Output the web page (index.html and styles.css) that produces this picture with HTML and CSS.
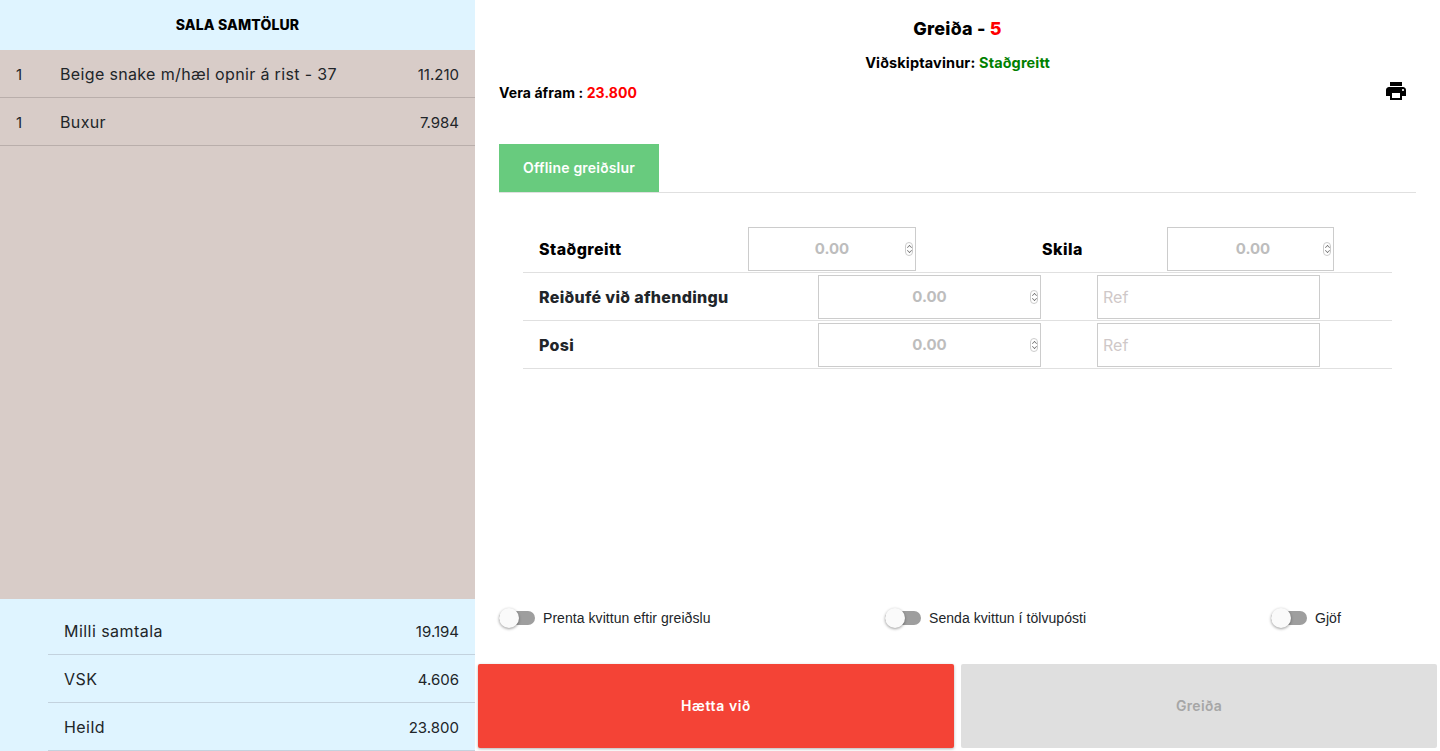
FILE: index.html
```html
<!DOCTYPE html>
<html lang="is">
<head>
    <meta charset="UTF-8">
    <meta name="viewport" content="width=device-width, initial-scale=1.0">
    <title>Greiða</title>
    <link rel="stylesheet" href="styles.css">
</head>
<body>

    <div class="page">

        <!-- Vinstri dálkur -->
        <aside class="summary">
            <h2 class="summary-title">SALA SAMTÖLUR</h2>

            <div class="summary-items">
                <div class="item-row">
                    <span class="item-qty">1</span>
                    <span class="item-name">Beige snake m/hæl opnir á rist - 37</span>
                    <span class="item-price">11.210</span>
                </div>
                <div class="item-row">
                    <span class="item-qty">1</span>
                    <span class="item-name">Buxur</span>
                    <span class="item-price">7.984</span>
                </div>
            </div>

            <div class="summary-totals">
                <div class="total-row"><span class="total-label">Milli samtala</span><span>19.194</span></div>
                <div class="total-row"><span class="total-label">VSK</span><span>4.606</span></div>
                <div class="total-row"><span class="total-label">Heild</span><span>23.800</span></div>
            </div>
        </aside>

        <!-- Greiðsla -->
        <main class="payment">
            <h1 class="pay-title">Greiða - <span class="red">5</span></h1>
            <p class="pay-customer">Viðskiptavinur: <span class="green">Staðgreitt</span></p>

            <div class="pay-balance">
                <p class="balance-text">Vera áfram : <span class="red">23.800</span></p>
                <svg class="print-icon" viewBox="0 0 24 24" width="24" height="24" aria-label="Prenta">
                    <path d="M19 8H5c-1.66 0-3 1.34-3 3v6h4v4h12v-4h4v-6c0-1.66-1.34-3-3-3zm-3 11H8v-5h8v5zm3-7c-.55 0-1-.45-1-1s.45-1 1-1 1 .45 1 1-.45 1-1 1zm-1-9H6v4h12V3z"/>
                </svg>
            </div>

            <div class="tabs">
                <div class="tab">Offline greiðslur</div>
            </div>

            <div class="methods">
                <div class="method-row method-row-cash">
                    <label class="method-label black">Staðgreitt</label>
                    <div class="num-field">
                        <input class="field" type="number" placeholder="0.00">
                        <span class="spinner"></span>
                    </div>
                    <label class="method-label black method-label-return">Skila</label>
                    <div class="num-field">
                        <input class="field" type="number" placeholder="0.00">
                        <span class="spinner"></span>
                    </div>
                </div>
                <div class="method-row">
                    <label class="method-label">Reiðufé við afhendingu</label>
                    <div class="num-field">
                        <input class="field" type="number" placeholder="0.00">
                        <span class="spinner"></span>
                    </div>
                    <input class="field field-ref" type="text" placeholder="Ref">
                </div>
                <div class="method-row">
                    <label class="method-label">Posi</label>
                    <div class="num-field">
                        <input class="field" type="number" placeholder="0.00">
                        <span class="spinner"></span>
                    </div>
                    <input class="field field-ref" type="text" placeholder="Ref">
                </div>
            </div>

            <div class="toggles">
                <div class="toggle-item"><span class="toggle"></span>Prenta kvittun eftir greiðslu</div>
                <div class="toggle-item"><span class="toggle"></span>Senda kvittun í tölvupósti</div>
                <div class="toggle-item"><span class="toggle"></span>Gjöf</div>
            </div>

            <div class="actions">
                <button class="btn btn-cancel">Hætta við</button>
                <button class="btn btn-pay">Greiða</button>
            </div>
        </main>
    </div>

</body>
</html>
```

FILE: styles.css
```css
* {
    box-sizing: border-box;
}

body {
    margin: 0;
    font-family: Inter, "Open Sans", sans-serif;
    color: #212529;
    background-color: #fff;
}

p, h1, h2 {
    margin: 0;
}

.page {
    display: flex;
    height: 751px;
    overflow: hidden;
}

.red {
    color: #f00;
}

.green {
    color: #008000;
}

/* Vinstri dálkur */
.summary {
    width: 475px;
    flex-shrink: 0;
    display: flex;
    flex-direction: column;
    background-color: #dff4ff;
}

.summary-title {
    height: 50px;
    line-height: 50px;
    text-align: center;
    font-size: 14px;
    font-weight: 800;
    letter-spacing: .15px;
    color: #000;
}

.summary-items {
    flex: 1;
    background-color: #d8ccc8;
}

.item-row {
    display: flex;
    align-items: center;
    height: 48px;
    padding: 1px 16px 0;
    border-bottom: 1px solid #b9aeab;
    font-size: 15px;
}

.item-qty {
    width: 44px;
}

.item-name {
    flex: 1;
    font-size: 16px;
    letter-spacing: .35px;
}

.summary-totals {
    padding: 8px 0 0 48px;
    height: 152px;
}

.total-row {
    display: flex;
    justify-content: space-between;
    align-items: center;
    height: 48px;
    padding: 1px 16px 0;
    border-bottom: 1px solid #c3d2de;
    font-size: 15px;
}

.total-label {
    font-size: 16px;
    letter-spacing: .45px;
}

/* Greiðsla */
.payment {
    flex: 1;
    min-width: 0;
    display: flex;
    flex-direction: column;
    padding: 0 3px;
}

.pay-title {
    margin-top: 18px;
    font-size: 18px;
    line-height: 21px;
    font-weight: 800;
    letter-spacing: .2px;
    text-align: center;
    color: #000;
}

.pay-customer {
    margin-top: 14px;
    font-size: 14.5px;
    line-height: 20px;
    font-weight: 700;
    letter-spacing: .15px;
    text-align: center;
    color: #000;
}

.pay-balance {
    display: flex;
    justify-content: space-between;
    align-items: flex-start;
    height: 28px;
    margin: 6px 29px 0 21px;
}

.balance-text {
    font-size: 14px;
    line-height: 28px;
    font-weight: 700;
    letter-spacing: .1px;
    color: #000;
}

.tabs {
    margin: 37px 21px 0 21px;
    border-bottom: 1px solid #e0e0e0;
}

.tab {
    width: 160px;
    height: 48px;
    line-height: 48px;
    text-align: center;
    font-size: 14px;
    font-weight: 600;
    letter-spacing: .2px;
    color: #fff;
    background-color: #68cb7e;
}

.methods {
    margin: 32px 45px 0 45px;
}

.method-row {
    display: grid;
    grid-template-columns: 295px 223px 56px 223px;
    align-items: center;
    height: 48px;
    border-bottom: 1px solid #e0e0e0;
}

.method-row-cash {
    grid-template-columns: 225px 168px 251px 167px;
}

.method-label {
    padding-left: 16px;
    font-size: 16px;
    font-weight: 800;
    letter-spacing: .32px;
    color: #212529;
}

.method-label.black {
    letter-spacing: .45px;
    color: #000;
}

.method-label-return {
    padding-left: 126px;
}

.num-field {
    position: relative;
    height: 44px;
}

.field {
    display: block;
    width: 100%;
    height: 44px;
    padding: 0 5px;
    border: 1px solid #ccc;
    background-color: #fff;
    font-family: inherit;
    font-size: 15px;
    outline: none;
}

.num-field .field {
    text-align: center;
    font-weight: 700;
    appearance: textfield;
}

.num-field .field::-webkit-inner-spin-button {
    -webkit-appearance: none;
    margin: 0;
}

.method-row-cash .num-field:last-child .field {
    padding-left: 10px;
}

.field::placeholder {
    color: #bdbdbd;
}

.field-ref {
    grid-column: 4;
    font-size: 16px;
    font-weight: 400;
}

.field-ref::placeholder {
    color: #cfc8c8;
}

/* Litli örvahnappurinn */
.spinner {
    position: absolute;
    top: 15px;
    right: 3px;
    width: 8px;
    height: 14px;
    border: 1px solid #ccc;
    border-radius: 4px;
}

.spinner::before,
.spinner::after {
    content: "";
    position: absolute;
    left: 1px;
    width: 4px;
    height: 4px;
    border-left: 1px solid #666;
    transform: scale(.7) rotate(45deg);
}

.spinner::before {
    top: 2px;
    border-top: 1px solid #666;
}

.spinner::after {
    bottom: 2px;
    border-left: 0;
    border-right: 1px solid #666;
    border-bottom: 1px solid #666;
}

.toggles {
    display: grid;
    grid-template-columns: 386px 386px 1fr;
    align-items: center;
    margin: auto 0 0 21px;
    height: 20px;
}

.toggle-item {
    display: flex;
    align-items: center;
    font-family: "Liberation Sans", Arial, sans-serif;
    font-size: 14px;
    letter-spacing: .06px;
    color: #212529;
}

.toggle {
    position: relative;
    width: 36px;
    height: 14px;
    margin-right: 8px;
    border-radius: 7px;
    background-color: #9e9e9e;
}

.toggle::before {
    content: "";
    position: absolute;
    top: -3px;
    left: 0;
    width: 20px;
    height: 20px;
    border-radius: 50%;
    background-color: #fafafa;
    box-shadow: 0 1px 3px rgba(0, 0, 0, .4);
}

.actions {
    display: grid;
    grid-template-columns: 476px 476px;
    gap: 7px;
    margin-top: 36px;
    margin-bottom: 3px;
}

.btn {
    height: 84px;
    padding: 0 0 2px;
    border: 0;
    border-radius: 2px;
    font-family: inherit;
    font-size: 14px;
    font-weight: 600;
}

.btn-cancel {
    letter-spacing: .6px;
    color: #fff;
    background-color: #f44336;
    box-shadow: 0 1px 3px rgba(0, 0, 0, .3);
}

.btn-pay {
    letter-spacing: .3px;
    color: #a6a6a6;
    background-color: #dfdfdf;
}
```
